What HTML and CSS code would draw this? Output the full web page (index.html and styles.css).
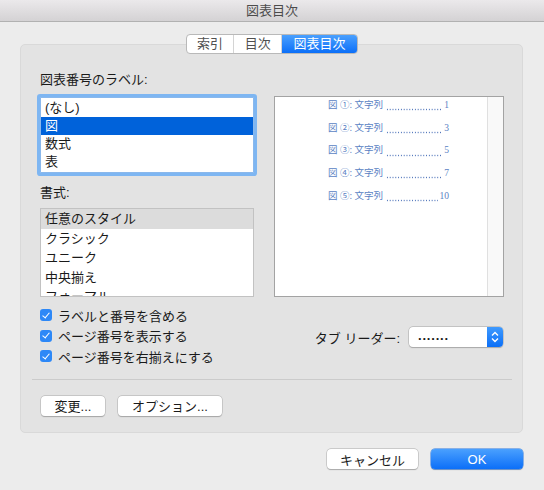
FILE: index.html
```html
<!DOCTYPE html>
<html lang="ja">
<head>
    <meta charset="UTF-8">
    <title>図表目次</title>
    <link rel="stylesheet" href="styles.css">
</head>
<body>
    <div class="window">
        <div class="titlebar">図表目次</div>

        <div class="dialog">
            <div class="tabs">
                <div class="tab">索引</div>
                <div class="tab">目次</div>
                <div class="tab active">図表目次</div>
            </div>

            <div class="panel">
                <div class="panel-body">
                    <div class="left-col">
                        <div class="field-label">図表番号のラベル:</div>
                        <div class="listbox focused">
                            <div class="list-row">(なし)</div>
                            <div class="list-row selected">図</div>
                            <div class="list-row">数式</div>
                            <div class="list-row">表</div>
                        </div>
                        <div class="field-label second">書式:</div>
                        <div class="listbox styles-list">
                            <div class="list-row current">任意のスタイル</div>
                            <div class="list-row">クラシック</div>
                            <div class="list-row">ユニーク</div>
                            <div class="list-row">中央揃え</div>
                            <div class="list-row">フォーマル</div>
                        </div>
                    </div>

                    <div class="preview">
                        <div class="preview-page">
                            <div class="toc-row"><span>図 ①:&nbsp;文字列</span><span class="leader"></span><span>1</span></div>
                            <div class="toc-row"><span>図 ②:&nbsp;文字列</span><span class="leader"></span><span>3</span></div>
                            <div class="toc-row"><span>図 ③:&nbsp;文字列</span><span class="leader"></span><span>5</span></div>
                            <div class="toc-row"><span>図 ④:&nbsp;文字列</span><span class="leader"></span><span>7</span></div>
                            <div class="toc-row"><span>図 ⑤:&nbsp;文字列</span><span class="leader"></span><span>10</span></div>
                        </div>
                        <div class="preview-scroll"></div>
                    </div>
                </div>

                <div class="options">
                    <div class="checks">
                        <label class="check"><span class="box"></span>ラベルと番号を含める</label>
                        <label class="check"><span class="box"></span>ページ番号を表示する</label>
                        <label class="check"><span class="box"></span>ページ番号を右揃えにする</label>
                    </div>
                    <div class="leader-field">
                        <span>タブ リーダー:</span>
                        <div class="popup">
                            <span class="popup-value">.......</span>
                            <span class="stepper">
                                <svg width="16" height="20" viewBox="0 0 16 20">
                                    <path d="M5 8.5 L8 5.5 L11 8.5" fill="none" stroke="#fff" stroke-width="1.4"/>
                                    <path d="M5 11.5 L8 14.5 L11 11.5" fill="none" stroke="#fff" stroke-width="1.4"/>
                                </svg>
                            </span>
                        </div>
                    </div>
                </div>

                <div class="separator"></div>

                <div class="panel-buttons">
                    <button class="btn change-btn">変更...</button>
                    <button class="btn option-btn">オプション...</button>
                </div>
            </div>

            <div class="footer">
                <button class="btn cancel-btn">キャンセル</button>
                <button class="btn ok-btn">OK</button>
            </div>
        </div>
    </div>
</body>
</html>
```

FILE: styles.css
```css
body {
    margin: 0;
    padding: 0;
    background-color: #ececec;
    font-family: "Liberation Sans", "Noto Sans CJK JP", sans-serif;
    font-size: 13px;
    color: #1a1a1a;
}

.window {
    width: 544px;
    height: 490px;
    overflow: hidden;
}

.titlebar {
    height: 21px;
    line-height: 22px;
    text-align: center;
    color: #4c4c4c;
    background: linear-gradient(#ebe9eb, #d4d2d4);
    border-bottom: 1px solid #b1b1b1;
}

.dialog {
    padding: 0 21px 0 20px;
}

/* segmented control */
.tabs {
    position: relative;
    z-index: 1;
    display: flex;
    width: 172px;
    height: 20px;
    margin: 12px auto 0;
    background-color: white;
    border: 1px solid #b9b9b9;
    border-radius: 4px;
    box-sizing: border-box;
    overflow: hidden;
}

.tab {
    width: 48px;
    line-height: 18px;
    text-align: center;
    color: #505050;
    border-right: 1px solid #d4d4d4;
}

.tab.active {
    width: 76px;
    border-right: none;
    color: white;
    background: linear-gradient(#4aa0fe, #0c6ff8);
}

.panel {
    margin-top: -10px;
    height: 389px;
    box-sizing: border-box;
    background-color: #e3e3e3;
    border: 1px solid #d9d9d9;
    border-radius: 5px;
}

.panel-body {
    display: grid;
    grid-template-columns: 214px 230px;
    column-gap: 20px;
    padding: 27px 0 0 19px;
}

.field-label {
    line-height: 16px;
    margin-bottom: 9px;
}

.field-label.second {
    margin-top: 12px;
    margin-bottom: 7px;
}

.listbox {
    background-color: white;
    border: 1px solid #c2c2c2;
    box-sizing: border-box;
    overflow: hidden;
}

.listbox.focused {
    height: 76px;
    padding-top: 1px;
    border-color: #8ab8ec;
    box-shadow: 0 0 0 3px #7eb6f2;
    border-radius: 1px;
}

.list-row {
    height: 18px;
    line-height: 18px;
    padding-left: 4px;
}

.list-row.selected {
    background-color: #0062da;
    color: white;
}

.styles-list {
    height: 89px;
}

.styles-list .list-row {
    height: 19.5px;
    line-height: 19.5px;
}

.list-row.current {
    background-color: #dcdcdc;
}

/* preview of the table */
.preview {
    display: flex;
    margin-top: 24px;
    height: 201px;
    background-color: white;
    border: 1px solid #a3a3a3;
    box-sizing: border-box;
}

.preview-page {
    flex: 1;
    padding: 1px 0 0 53px;
}

.preview-scroll {
    width: 15px;
    background-color: #f9f9f9;
    border-left: 1px solid #e0e0e0;
}

.toc-row {
    display: flex;
    width: 121px;
    height: 22.7px;
    line-height: 14px;
    font-family: "Liberation Serif", "Noto Sans CJK JP", serif;
    font-size: 9.5px;
    color: #5a7fc3;
    white-space: nowrap;
}

.leader {
    flex: 1;
    height: 14px;
    margin: 0 2px 0 3px;
    background-image: radial-gradient(circle, #4a70b8 0.6px, transparent 0.9px);
    background-size: 2.8px 2.8px;
    background-repeat: repeat-x;
    background-position: 0 10.2px;
}

/* check boxes and tab leader */
.options {
    display: flex;
    align-items: center;
    justify-content: space-between;
    padding: 8px 19px 0 19px;
}

.check {
    display: flex;
    align-items: center;
    height: 20.5px;
}

.box {
    width: 12px;
    height: 12px;
    margin-right: 6px;
    border-radius: 3px;
    background-color: #2d88f7;
    position: relative;
}

.box::after {
    content: "";
    position: absolute;
    left: 4px;
    top: 1.5px;
    width: 3px;
    height: 6px;
    border: solid white;
    border-width: 0 1.6px 1.6px 0;
    transform: rotate(40deg);
}

.leader-field {
    display: flex;
    align-items: center;
    gap: 9px;
    margin-top: 3px;
}

.popup {
    display: flex;
    width: 94px;
    height: 20px;
    background-color: white;
    border-radius: 4px;
    box-shadow: 0 0 0 0.5px #a9a9a9, 0 0.5px 1px rgba(0, 0, 0, 0.25);
    overflow: hidden;
}

.popup-value {
    flex: 1;
    padding-left: 9px;
    line-height: 18px;
    letter-spacing: 0.8px;
    font-weight: bold;
}

.stepper {
    width: 16px;
    height: 20px;
    background: linear-gradient(#3f9afe, #0b6ff7);
}

.stepper svg {
    display: block;
}

.separator {
    height: 1px;
    margin: 12px 10px 0 11px;
    background-color: #cbcbcb;
}

.panel-buttons {
    display: flex;
    gap: 13px;
    padding: 16px 0 0 20px;
}

/* push buttons */
.btn {
    height: 20px;
    padding: 0;
    font-family: "Liberation Sans", "Noto Sans CJK JP", sans-serif;
    font-size: 13px;
    color: #1a1a1a;
    background-color: white;
    border: none;
    border-radius: 4px;
    box-shadow: 0 0 0 0.5px #b0b0b0, 0 0.5px 1px rgba(0, 0, 0, 0.3);
    cursor: pointer;
}

.change-btn {
    width: 64px;
}

.option-btn {
    width: 104px;
}

.footer {
    display: flex;
    justify-content: flex-end;
    gap: 13px;
    margin-top: 16px;
}

.cancel-btn {
    width: 91px;
}

.ok-btn {
    width: 92px;
    color: white;
    background: linear-gradient(#4aa0fe, #0c6ff8);
    box-shadow: 0 0 0 0.5px #2c7de8, 0 0.5px 1px rgba(0, 0, 0, 0.3);
}
```
